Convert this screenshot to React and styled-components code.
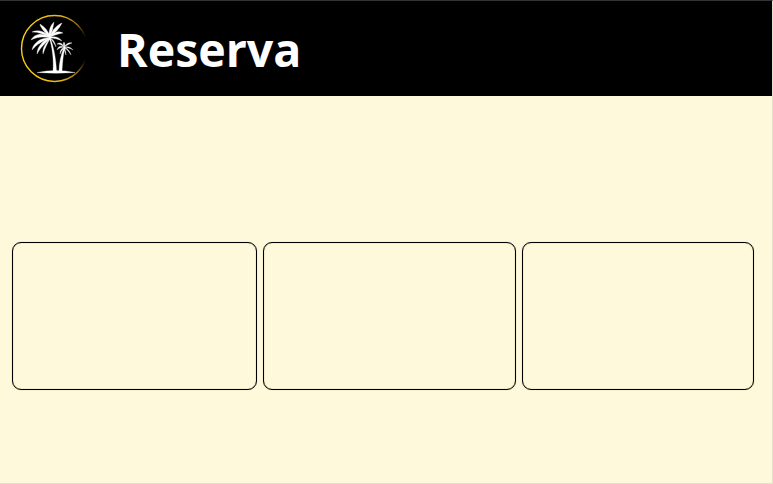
import React from "react";
import styled, { createGlobalStyle } from "styled-components";

const Global = createGlobalStyle`
  html, body { margin: 0; padding: 0; background: #fff9db; }
  * { box-sizing: border-box; }
`;

const Page = styled.div`
  width: 773px;
  height: 484px;
  display: flex;
  flex-direction: column;
  background: #fff9db;
  border-top: 1px solid #333;
  border-right: 1px solid #e4e0cc;
  border-bottom: 1px solid #e4e0cc;
  overflow: hidden;
`;

const Header = styled.header`
  height: 95px;
  flex: none;
  background: #000;
  display: flex;
  align-items: center;
  gap: 27px;
  padding: 0 0 0 20px;
`;

const Title = styled.h1`
  margin: 0;
  font-family: "Open Sans", sans-serif;
  font-weight: 700;
  font-size: 46.5px;
  line-height: 60px;
  color: #fff;
`;

const Main = styled.main`
  flex: 1;
  padding: 146px 0 0 12px;
`;

const Cards = styled.div`
  display: grid;
  grid-template-columns: 245px 253px 232px;
  gap: 6px;
`;

const Card = styled.div`
  height: 148px;
  border: 1px solid #000;
  border-radius: 9px;
  box-shadow: inset 0 0 1px rgba(0, 0, 0, 0.55), 0 0 1px rgba(0, 0, 0, 0.35);
`;

const Frond = styled.path`
  fill: #fff;
  stroke: #fff;
  stroke-width: 0.3;
  stroke-linejoin: round;
`;

const Logo = () => (
  <svg width="70" height="70" viewBox="20 13 70 70" style={{ display: "block", flex: "none" }}>
    <defs>
      <linearGradient id="ring" gradientUnits="userSpaceOnUse" x1="21" y1="48" x2="87" y2="48">
        <stop offset="0" stopColor="#fbd01a" />
        <stop offset="0.6" stopColor="#e8b614" />
        <stop offset="0.85" stopColor="#9a760e" />
        <stop offset="0.98" stopColor="#000" />
      </linearGradient>
    </defs>
    <circle cx="54.5" cy="47.5" r="33" fill="none" stroke="url(#ring)" strokeWidth="1.4" />
    <Frond d="M37 71.5 Q56 67.5 75 71.5 Q56 73 37 71.5 Z" />
    <Frond d="M49 36 C52 45 54 58 53 70 L56.5 70 C56 56 53 44 50 36 Z" />
    <Frond d="M59 70 C59 62 61 54 64 46 L65 46.5 C63 54 62.5 62 62 70 Z" />
    <Frond d="M50 36 C46 31 38 28 32 31 C38 31 44 33 50 36 Z" />
    <Frond d="M50 36 C42 31 34 33 31 39 C37 36 43 35 50 37 Z" />
    <Frond d="M50 37 C41 36 33 42 32 49 C37 43 43 40 50 37 Z" />
    <Frond d="M50 37 C43 39 37 46 37 53 C41 46 45 42 50 38 Z" />
    <Frond d="M50 37 C46 42 42 47 43 53 C45 47 47 43 50 38 Z" />
    <Frond d="M49 36 C44 30 40 26 40 23 C45 26 48 30 50 35 Z" />
    <Frond d="M49 35 C49 29 50 25 54 21 C53 27 52 31 50 36 Z" />
    <Frond d="M50 35 C53 28 57 24 62 22 C59 28 55 32 50 36 Z" />
    <Frond d="M50 36 C55 30 59 30 63 32 C58 33 54 34 50 36 Z" />
    <Frond d="M50 36 C55 35 59 36 62 40 C58 38 54 37 50 37 Z" />
    <Frond d="M50 37 C53 38 55 41 56 46 C54 42 52 39 50 37 Z" />
    <Frond d="M64 46 C62 42 60 41 57 43 C60 43 62 44 64 46 Z" />
    <Frond d="M64 46 C60 44 58 46 57 49 C59 47 62 46 64 46.5 Z" />
    <Frond d="M64 46.5 C62 47 60 49 60 53 C61 50 63 48 64.5 46.5 Z" />
    <Frond d="M64 46 C63 44 63 42 64 41 C65 42 65 44 64.5 46 Z" />
    <Frond d="M64 46 C66 43 69 41 72 42 C69 43 67 44 64 46 Z" />
    <Frond d="M64 46 C67 45 71 46 73 49 C70 47 67 46.5 64.5 46.5 Z" />
    <Frond d="M64.5 46.5 C67 47 70 50 71 54 C69 51 67 48 64 47 Z" />
    <Frond d="M64.5 46.5 C65 48 66 51 66 54 C65 51 64 49 64 46.5 Z" />
  </svg>
);

export default function App() {
  return (
    <Page>
      <Global />
      <Header>
        <Logo />
        <Title>Reserva</Title>
      </Header>
      <Main>
        <Cards>
          <Card />
          <Card />
          <Card />
        </Cards>
      </Main>
    </Page>
  );
}
